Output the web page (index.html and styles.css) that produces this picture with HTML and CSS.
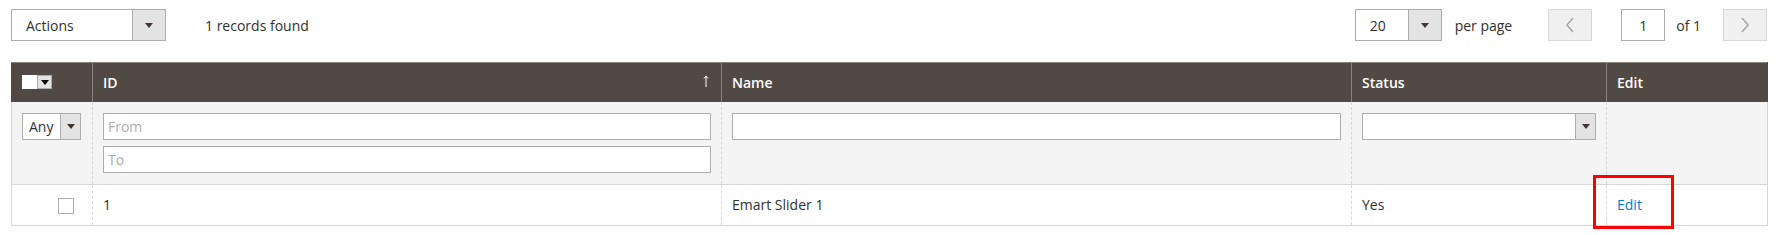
FILE: index.html
```html
<!DOCTYPE html>
<html lang="en">
<head>
    <meta charset="UTF-8">
    <title>Sliders grid</title>
    <link rel="stylesheet" href="styles.css">
</head>
<body>
    <div class="toolbar">
        <div class="toolbar-left">
            <div class="select actions">
                <span class="select-value">Actions</span>
                <span class="select-btn"><span class="caret"></span></span>
            </div>
            <span class="records">1 records found</span>
        </div>
        <div class="toolbar-right">
            <div class="select perpage">
                <span class="select-value">20</span>
                <span class="select-btn"><span class="caret"></span></span>
            </div>
            <span class="perpage-label">per page</span>
            <button class="pager-btn prev">
                <svg width="10" height="16" viewBox="0 0 10 16"><path d="M8 1 L2 8 L8 15" fill="none" stroke="#a8a8a8" stroke-width="1.6"/></svg>
            </button>
            <div class="page-input">1</div>
            <span class="page-total">of 1</span>
            <button class="pager-btn next">
                <svg width="10" height="16" viewBox="0 0 10 16"><path d="M2 1 L8 8 L2 15" fill="none" stroke="#a8a8a8" stroke-width="1.6"/></svg>
            </button>
        </div>
    </div>

    <table class="grid">
        <colgroup>
            <col style="width:81px">
            <col style="width:629px">
            <col style="width:630px">
            <col style="width:255px">
            <col style="width:161px">
        </colgroup>
        <thead>
            <tr class="head">
                <th class="col-mass">
                    <div class="mass">
                        <span class="mass-box"></span>
                        <span class="mass-btn"><span class="caret small"></span></span>
                    </div>
                </th>
                <th class="sortable">ID
                    <svg class="sort" width="6" height="12" viewBox="0 0 6 12"><path d="M3 12 V1 M1 3.5 L3 1 L5 3.5" fill="none" stroke="#fff" stroke-width="1"/></svg>
                </th>
                <th>Name</th>
                <th>Status</th>
                <th>Edit</th>
            </tr>
            <tr class="filters">
                <td>
                    <div class="select any">
                        <span class="select-value">Any</span>
                        <span class="select-btn"><span class="caret"></span></span>
                    </div>
                </td>
                <td>
                    <div class="input placeholder">From</div>
                    <div class="input placeholder second">To</div>
                </td>
                <td><div class="input"></div></td>
                <td>
                    <div class="select status">
                        <span class="select-value"></span>
                        <span class="select-btn"><span class="caret"></span></span>
                    </div>
                </td>
                <td></td>
            </tr>
        </thead>
        <tbody>
            <tr class="row">
                <td class="cell-check"><span class="checkbox"></span></td>
                <td>1</td>
                <td>Emart Slider 1</td>
                <td>Yes</td>
                <td>
                    <div class="edit-wrap">
                        <a href="#" class="edit-link">Edit</a>
                        <span class="highlight"></span>
                    </div>
                </td>
            </tr>
        </tbody>
    </table>
</body>
</html>
```

FILE: styles.css
```css
body {
    margin: 0;
    padding: 9px 11px;
    font-family: "Open Sans", "Liberation Sans", sans-serif;
    font-size: 14px;
    color: #303030;
    background: #fff;
}
.toolbar {
    display: flex;
    justify-content: space-between;
    align-items: center;
    height: 32px;
}
.toolbar-left, .toolbar-right {
    display: flex;
    align-items: center;
    height: 32px;
}
.select {
    display: flex;
    box-sizing: border-box;
    border: 1px solid #adadad;
    background: #fff;
}
.select-value {
    flex: 1;
    display: flex;
    align-items: center;
}
.select-btn {
    display: flex;
    align-items: center;
    justify-content: center;
    background: #e3e3e3;
    border-left: 1px solid #adadad;
}
.caret {
    width: 0;
    height: 0;
    border-left: 4px solid transparent;
    border-right: 4px solid transparent;
    border-top: 5px solid #41362f;
}
.caret.small {
    border-top: 5px solid #000;
}
.actions {
    width: 155px;
    height: 32px;
}
.actions .select-value {
    padding-left: 14px;
}
.actions .select-btn {
    width: 32px;
}
.records {
    margin-left: 39px;
}
.perpage {
    width: 87px;
    height: 32px;
}
.perpage .select-value {
    padding-left: 14px;
}
.perpage .select-btn {
    width: 32px;
}
.perpage-label {
    margin-left: 13px;
    margin-right: 36px;
}
.pager-btn {
    width: 44px;
    height: 32px;
    box-sizing: border-box;
    border: 1px solid #d6d6d6;
    background: #f0f0f0;
    padding: 0;
    display: flex;
    align-items: center;
    justify-content: center;
}
.page-input {
    width: 44px;
    height: 32px;
    box-sizing: border-box;
    border: 1px solid #adadad;
    margin-left: 29px;
    display: flex;
    align-items: center;
    justify-content: center;
}
.page-total {
    margin-left: 11px;
    margin-right: 22px;
}
.grid {
    margin-top: 21px;
    width: 1756px;
    border-collapse: collapse;
    table-layout: fixed;
}
.head th {
    background: #514943;
    color: #fff;
    font-weight: 600;
    text-align: left;
    height: 39px;
    padding: 0 10px;
    box-sizing: border-box;
    border-left: 1px solid #8a837f;
    border-right: 1px solid #8a837f;
    border-top: 1px solid #8a837f;
}
.head th:first-child {
    border-left-color: #514943;
}
.head th:last-child {
    border-right-color: #514943;
}
.sortable {
    position: relative;
}
.sort {
    position: absolute;
    right: 12px;
    top: 12px;
}
.mass {
    display: flex;
    height: 14px;
    width: 30px;
}
.mass-box {
    width: 15px;
    background: #fff;
}
.mass-btn {
    width: 15px;
    background: #e3e3e3;
    border: 1px solid #adadad;
    box-sizing: border-box;
    display: flex;
    align-items: center;
    justify-content: center;
}
.filters td {
    background: #f4f4f4;
    height: 82px;
    padding: 11px 10px;
    box-sizing: border-box;
    vertical-align: top;
    border-left: 1px dashed #d6d6d6;
    border-bottom: 1px solid #d6d6d6;
}
.filters td:first-child {
    border-left: 1px solid #d6d6d6;
}
.filters td:last-child {
    border-right: 1px solid #d6d6d6;
}
.input {
    box-sizing: border-box;
    height: 27px;
    border: 1px solid #adadad;
    background: #fff;
    padding-left: 4px;
    display: flex;
    align-items: center;
}
.placeholder {
    color: #adadad;
}
.second {
    margin-top: 6px;
}
.any {
    width: 59px;
    height: 27px;
}
.any .select-value {
    padding-left: 6px;
}
.any .select-btn {
    width: 19px;
}
.status {
    width: 234px;
    height: 27px;
}
.status .select-btn {
    width: 19px;
}
.row td {
    height: 41px;
    padding: 0 10px;
    box-sizing: border-box;
    border-left: 1px dashed #d6d6d6;
    border-bottom: 1px solid #d6d6d6;
}
.row td:first-child {
    border-left: 1px solid #d6d6d6;
}
.row td:last-child {
    border-right: 1px solid #d6d6d6;
}
.cell-check {
    text-align: right;
}
.checkbox {
    display: inline-block;
    width: 14px;
    height: 14px;
    border: 1px solid #adadad;
    background: #fff;
    vertical-align: middle;
    margin-right: 8px;
}
.edit-wrap {
    position: relative;
}
.edit-link {
    color: #007bdb;
    text-decoration: none;
}
.highlight {
    position: absolute;
    left: -24px;
    top: -20px;
    width: 81px;
    height: 54px;
    box-sizing: border-box;
    border: 3px solid #ff0000;
}
```
